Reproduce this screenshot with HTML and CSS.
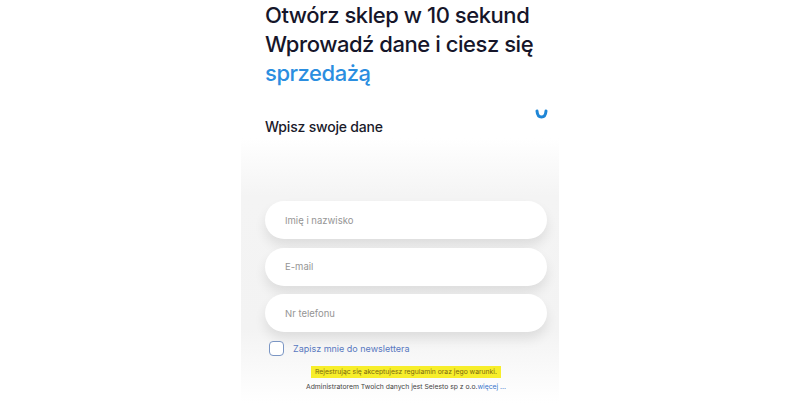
FILE: index.html
```html
<!DOCTYPE html>
<html lang="pl">
<head>
<meta charset="utf-8">
<link rel="stylesheet" href="styles.css">
</head>
<body>
<div class="page">
  <main class="col">
    <h1 class="title">Otwórz sklep w 10 sekund<br>Wprowadź dane i ciesz się<br><span class="accent">sprzedażą</span></h1>
    <div class="sub-row">
      <h2 class="sub">Wpisz swoje dane</h2>
      <svg class="chev" width="13" height="10" viewBox="0 0 13 10"><path d="M2 2 Q2.4 8 6.5 8 Q10.6 8 11 2" fill="none" stroke="#1f86d6" stroke-width="3" stroke-linecap="round" stroke-linejoin="round"/></svg>
    </div>
    <form class="panel">
      <div class="field">Imię i nazwisko</div>
      <div class="field">E-mail</div>
      <div class="field">Nr telefonu</div>
      <label class="check"><span class="box"></span><span class="check-label">Zapisz mnie do newslettera</span></label>
      <p class="terms"><span class="hl">Rejestrując się akceptujesz regulamin oraz jego warunki.</span></p>
      <p class="admin">Administratorem Twoich danych jest Selesto sp z o.o.<span class="more">więcej ...</span></p>
    </form>
  </main>
</div>
</body>
</html>
```
FILE: styles.css
```css
* { box-sizing: border-box; }
html, body { margin: 0; padding: 0; background: #fff; }
body { font-family: Inter, "Noto Sans", sans-serif; }
.page { width: 800px; height: 412px; display: flex; justify-content: center; overflow: hidden; }
.col { width: 318px; display: flex; flex-direction: column; }
.title {
  margin: 0; padding: 1px 0 0 24px;
  font-size: 22px; line-height: 29px; font-weight: 500; color: #16162a; letter-spacing: -0.45px;
}
.accent { color: #2b8ee0; }
.sub-row { display: flex; justify-content: space-between; align-items: flex-start; padding: 20px 11px 0 24px; height: 50px; }
.sub { margin: 10px 0 0; font-size: 14px; font-weight: 500; color: #1a1a2a; letter-spacing: -0.2px; }
.chev { display: block; flex: none; margin-top: 1px; }
.panel {
  margin: 0; padding: 63px 12px 12px 24px; display: flex; flex-direction: column;
  background: linear-gradient(180deg, #ffffff 0%, #f4f4f4 22%, #f3f3f3 72%, #ffffff 100%);
}
.field {
  height: 38px; border-radius: 19px; background: #fff; margin-bottom: 8.5px;
  padding-left: 20px; display: flex; align-items: center;
  font-size: 9.5px; color: #959595;
  box-shadow: 0 7px 12px rgba(0,0,0,0.09);
}
.check { display: flex; align-items: center; gap: 9px; margin: 0 0 0 4px; }
.box { width: 15px; height: 15px; border: 1.3px solid #7b96c4; border-radius: 4px; background: #fff; }
.check-label { font-size: 9px; color: #5878c0; }
.terms { margin: 10px 0 0; text-align: center; font-size: 6.8px; line-height: 12px; }
.hl { display: inline-block; background: #f7ee2a; color: #7c6b10; padding: 0 4px; }
.admin { margin: 4px 0 0; text-align: center; font-size: 6.8px; color: #444; }
.more { color: #3a76cc; }
```
